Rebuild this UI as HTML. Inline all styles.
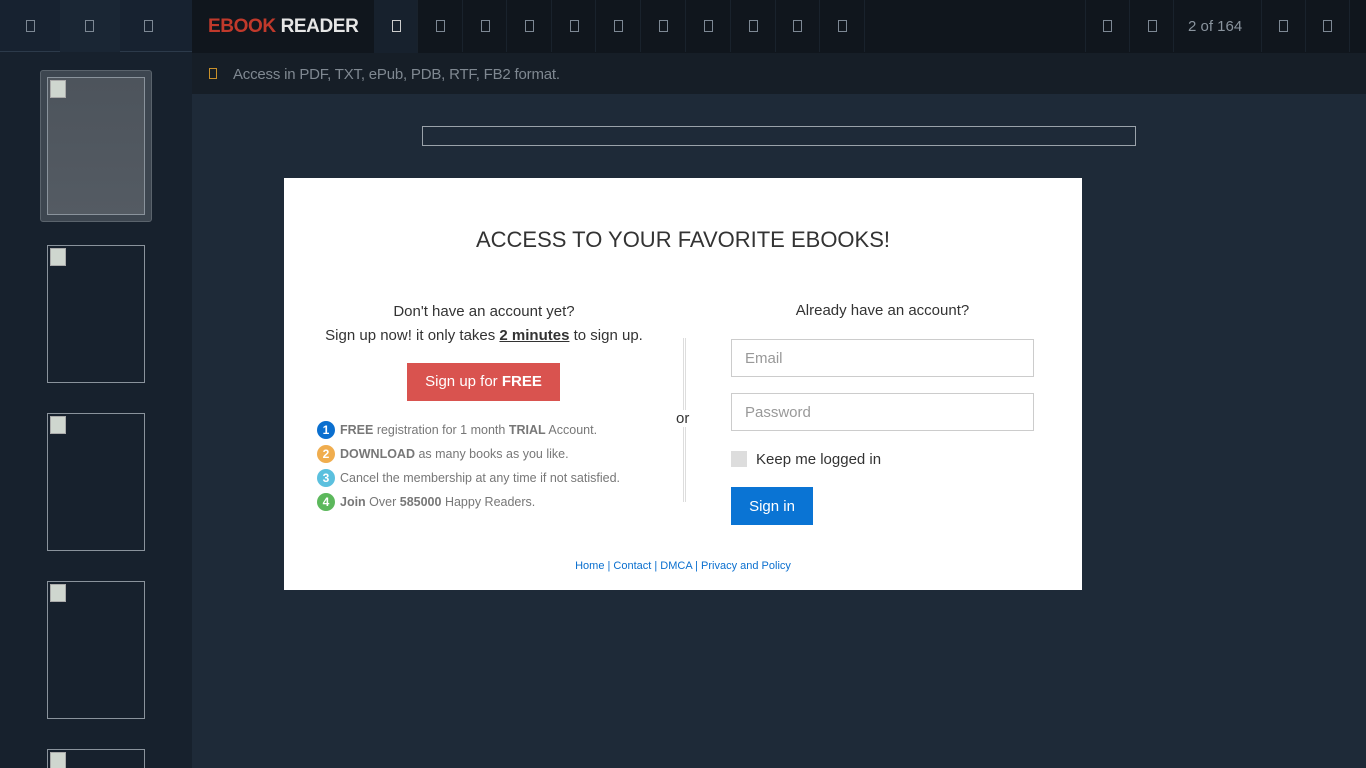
<!DOCTYPE html>
<html style="height:768px;overflow:hidden"><head><meta charset="utf-8"><style>
*{margin:0;padding:0;box-sizing:border-box}
body{width:1366px;height:768px;overflow:hidden;background:#1e2a38;font-family:"Liberation Sans",sans-serif;position:relative}
.abs{position:absolute}
.ic{position:absolute;width:9px;height:12px;border:1px solid #7d8894;top:20px}
.cell{position:absolute;top:0;height:52px;border-right:1px solid #19222c}
.thumb{position:absolute;left:47px;width:98px;height:138px;border:1px solid #8a939c;overflow:hidden}
.thumb:before{content:"";position:absolute;left:2px;top:2px;width:14px;height:16px;border:1px solid #aaa;background:#cfd6cf}
.li{height:24px;line-height:24px;white-space:nowrap}
.n{display:inline-block;width:18px;height:18px;border-radius:50%;color:#fff;font-size:12px;font-weight:bold;text-align:center;line-height:18px;vertical-align:middle;margin-right:5px;position:relative;top:-1px}
</style></head><body>
<div class="abs" style="left:0;top:0;width:192px;height:768px;background:#17212d"></div>
<div class="abs" style="left:0;top:0;width:192px;height:52px;background:#172230;border-bottom:1px solid #2c3a4a"></div>
<div class="abs" style="left:60px;top:0;width:60px;height:52px;background:#1a2634"></div>
<div class="ic" style="left:26px"></div><div class="ic" style="left:85px"></div><div class="ic" style="left:144px"></div>
<div class="abs" style="left:192px;top:0;width:1174px;height:53px;background:#10161d"></div>
<div class="abs" style="left:208px;top:16px;font-size:19px;font-weight:bold;color:#c0392b;letter-spacing:-0.4px">EBOOK <span style="color:#e6e6e6">READER</span></div>
<div class="abs" style="left:374px;top:0;width:44px;height:53px;background:#17212d"></div>
<div class="cell" style="left:374px;width:44px"></div><div class="ic" style="left:392px;border-color:#ccc"></div>
<div class="cell" style="left:418px;width:45px"></div><div class="ic" style="left:436px"></div>
<div class="cell" style="left:463px;width:44px"></div><div class="ic" style="left:481px"></div>
<div class="cell" style="left:507px;width:45px"></div><div class="ic" style="left:525px"></div>
<div class="cell" style="left:552px;width:44px"></div><div class="ic" style="left:570px"></div>
<div class="cell" style="left:596px;width:45px"></div><div class="ic" style="left:614px"></div>
<div class="cell" style="left:641px;width:45px"></div><div class="ic" style="left:659px"></div>
<div class="cell" style="left:686px;width:45px"></div><div class="ic" style="left:704px"></div>
<div class="cell" style="left:731px;width:45px"></div><div class="ic" style="left:749px"></div>
<div class="cell" style="left:776px;width:44px"></div><div class="ic" style="left:793px"></div>
<div class="cell" style="left:820px;width:45px"></div><div class="ic" style="left:838px"></div>
<div class="cell" style="left:1085px;width:45px;border-left:1px solid #19222c"></div><div class="ic" style="left:1103px"></div>
<div class="cell" style="left:1130px;width:44px"></div><div class="ic" style="left:1148px"></div>
<div class="cell" style="left:1174px;width:88px"></div>
<div class="abs" style="left:1188px;top:18px;font-size:15px;color:#8a949e">2 of 164</div>
<div class="cell" style="left:1262px;width:44px"></div><div class="ic" style="left:1279px"></div>
<div class="cell" style="left:1306px;width:44px"></div><div class="ic" style="left:1323px"></div>
<div class="abs" style="left:192px;top:53px;width:1174px;height:41px;background:#161e27"></div>
<div class="ic" style="left:209px;top:68px;border-color:#c8902a;width:8px;height:11px"></div>
<div class="abs" style="left:233px;top:66px;font-size:15px;color:#7f8891;letter-spacing:-0.2px">Access in PDF, TXT, ePub, PDB, RTF, FB2 format.</div>
<div class="abs" style="left:40px;top:70px;width:112px;height:152px;background:#3d4650;border:1px solid #5a636c;border-radius:3px"></div>
<div class="thumb" style="top:77px;background:linear-gradient(#4d545c,#545b63)"></div>
<div class="thumb" style="top:245px"></div>
<div class="thumb" style="top:413px"></div>
<div class="thumb" style="top:581px"></div>
<div class="thumb" style="top:749px;height:19px;border-bottom:none"></div>
<div class="abs" style="left:422px;top:126px;width:714px;height:20px;border:1px solid #9aa2aa"></div>
<div class="abs" style="left:284px;top:178px;width:798px;height:412px;background:#fff"></div>
<div class="abs" style="left:284px;top:227px;width:798px;text-align:center;font-size:22px;color:#333">ACCESS TO YOUR FAVORITE EBOOKS!</div>
<div class="abs" style="left:304px;top:300px;width:360px;text-align:center;font-size:15px;line-height:24px;color:#333">Don't have an account yet?<br>Sign up now! it only takes <b style="text-decoration:underline">2 minutes</b> to sign up.</div>
<div class="abs" style="left:407px;top:363px;width:153px;height:38px;background:#d9534f;color:#fff;font-size:15px;text-align:center;line-height:38px">Sign up for <b>FREE</b></div>
<div class="abs" style="left:317px;top:418px;font-size:12.5px;color:#777">
<div class="li"><span class="n" style="background:#0a6fcf">1</span><b>FREE</b> registration for 1 month <b>TRIAL</b> Account.</div>
<div class="li"><span class="n" style="background:#f0ad4e">2</span><b>DOWNLOAD</b> as many books as you like.</div>
<div class="li"><span class="n" style="background:#5bc0de">3</span>Cancel the membership at any time if not satisfied.</div>
<div class="li"><span class="n" style="background:#5cb85c">4</span><b>Join</b> Over <b>585000</b> Happy Readers.</div>
</div>
<div class="abs" style="left:683px;top:338px;width:3px;height:164px;border-left:1px solid #ddd;border-right:1px solid #ddd"></div>
<div class="abs" style="left:674px;top:410px;background:#fff;padding:0 2px;font-size:15px;color:#333">or</div>
<div class="abs" style="left:731px;top:302px;width:303px;text-align:center;font-size:15px;color:#333">Already have an account?</div>
<div class="abs" style="left:731px;top:339px;width:303px;height:38px;border:1px solid #ccc;padding-left:13px;line-height:37px;font-size:15px;color:#999">Email</div>
<div class="abs" style="left:731px;top:393px;width:303px;height:38px;border:1px solid #ccc;padding-left:13px;line-height:37px;font-size:15px;color:#999">Password</div>
<div class="abs" style="left:731px;top:451px;width:16px;height:16px;background:#ddd"></div>
<div class="abs" style="left:756px;top:451px;font-size:15px;color:#333">Keep me logged in</div>
<div class="abs" style="left:731px;top:487px;width:82px;height:38px;background:#0a74d4;color:#fff;font-size:15px;text-align:center;line-height:39px">Sign in</div>
<div class="abs" style="left:284px;top:560px;width:798px;text-align:center;font-size:11px;color:#0a6fcf">Home | Contact | DMCA | Privacy and Policy</div>
</body></html>
